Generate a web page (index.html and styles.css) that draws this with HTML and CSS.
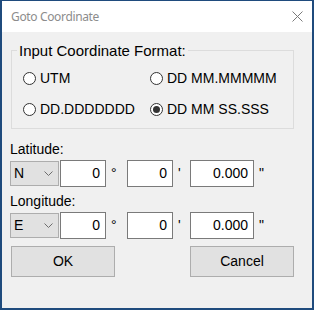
FILE: index.html
```html
<!DOCTYPE html>
<html>
  <head>
    <title>Goto Coordinate</title>
    <meta name="viewport" content="width=device-width, initial-scale=1.0">
    <link rel="stylesheet" href="styles.css">
  </head>
  <body>
    <div class="win">
      <div class="titlebar">
        <span class="title">Goto Coordinate</span>
        <svg class="close" width="11" height="11" viewBox="0 0 11 11"><path d="M0.5 0.5L10.5 10.5M10.5 0.5L0.5 10.5" stroke="#7a7a7a" stroke-width="1" fill="none"/></svg>
      </div>
      <div class="dlg">
        <div class="group">
          <div class="legend">Input Coordinate Format:</div>
          <div class="radios">
            <div class="radio"><span class="dot"></span>UTM</div>
            <div class="radio"><span class="dot"></span>DD MM.MMMMM</div>
            <div class="radio"><span class="dot"></span>DD.DDDDDDD</div>
            <div class="radio"><span class="dot on"></span>DD MM SS.SSS</div>
          </div>
        </div>
        <div class="lbl">Latitude:</div>
        <div class="coord">
          <div class="sel"><span>N</span><svg width="9" height="5" viewBox="0 0 9 5"><path d="M0.5 0.5L4.5 4.5L8.5 0.5" stroke="#6d6d6d" fill="none"/></svg></div>
          <div class="tb w46">0</div><span class="unit u21">°</span>
          <div class="tb w46">0</div><span class="unit u17">'</span>
          <div class="tb w64">0.000</div><span class="unit">"</span>
        </div>
        <div class="lbl lbl2">Longitude:</div>
        <div class="coord">
          <div class="sel"><span>E</span><svg width="9" height="5" viewBox="0 0 9 5"><path d="M0.5 0.5L4.5 4.5L8.5 0.5" stroke="#6d6d6d" fill="none"/></svg></div>
          <div class="tb w46">0</div><span class="unit u21">°</span>
          <div class="tb w46">0</div><span class="unit u17">'</span>
          <div class="tb w64">0.000</div><span class="unit">"</span>
        </div>
        <div class="btns">
          <div class="btn">OK</div>
          <div class="btn">Cancel</div>
        </div>
      </div>
    </div>
  </body>
</html>
```
FILE: styles.css
```css
*{box-sizing:border-box;margin:0;padding:0;}
body{background:#fff;font-family:"Liberation Sans",Arial,sans-serif;font-size:14px;color:#000;}
.win{width:314px;height:310px;display:flex;flex-direction:column;
  border-style:solid;border-color:#1f4b7d;border-width:1px 2px 2px 2px;}
.titlebar{height:31px;background:#fff;display:flex;align-items:center;justify-content:space-between;padding:0 9px 0 9px;}
.title{font-family:"Noto Sans","Open Sans",sans-serif;font-size:12px;letter-spacing:-0.35px;color:#8c8c8c;}
.close{display:block;}
.dlg{flex:1;background:#f0f0f0;padding-top:18px;}
.group{margin-left:9px;width:283px;border:1px solid #dcdcdc;padding-bottom:9px;}
.legend{font-size:15px;line-height:17px;margin:-9px 0 0 5px;padding:0 2px;background:#f0f0f0;width:fit-content;}
.radios{display:grid;grid-template-columns:127px auto;row-gap:11px;margin-top:9px;padding-left:11px;}
.radio{display:flex;align-items:center;height:20px;line-height:20px;gap:4px;}
.dot{width:13px;height:13px;border:1px solid #333;border-radius:50%;background:#fff;display:flex;align-items:center;justify-content:center;}
.dot.on::after{content:"";width:7px;height:7px;border-radius:50%;background:#333;}
.lbl{margin:12px 0 0 8px;line-height:16px;}
.lbl2{margin-top:6px;}
.coord{display:flex;align-items:center;height:27px;margin:3px 0 0 8px;}
.sel{width:49px;height:25px;line-height:23px;background:#e1e1e1;border:1px solid #adadad;
  display:flex;align-items:center;justify-content:space-between;padding:0 5px 0 3px;margin-right:1px;}
.sel svg{display:block;}
.tb{height:27px;line-height:25px;background:#fff;border:1px solid #7a7a7a;text-align:right;padding-right:5px;}
.w46{width:46px;}
.w64{width:64px;}
.unit{line-height:27px;padding-left:5px;}
.u21{width:21px;}
.u17{width:17px;}
.btns{display:flex;justify-content:space-between;margin:7px 0 0 9px;width:283px;}
.btn{width:104px;height:31px;line-height:29px;text-align:center;background:#e1e1e1;border:1px solid #adadad;}
```
